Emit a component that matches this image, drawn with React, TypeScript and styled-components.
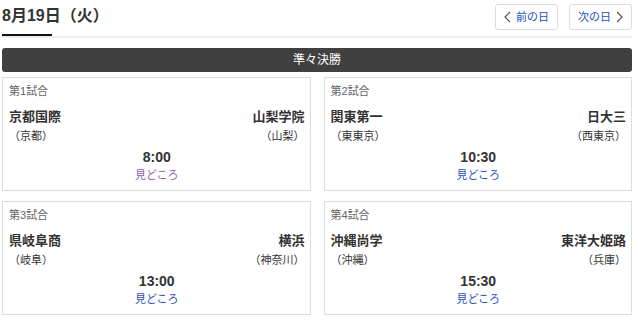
import React from "react";
import styled, { createGlobalStyle } from "styled-components";

const Global = createGlobalStyle`
  html, body { margin: 0; padding: 0; background: #fff; }
  body {
    font-family: "Liberation Sans", "Noto Sans CJK JP", sans-serif;
    color: #333;
  }
  * { box-sizing: border-box; }
`;

const Page = styled.div`
  width: 638px;
  padding: 0 6px 0 2px;
`;

const Header = styled.div`
  display: flex;
  justify-content: space-between;
  align-items: flex-start;
  padding: 4px 0 6px;
  border-bottom: 2px solid #eee;
  position: relative;
`;

const Title = styled.h1`
  margin: 0;
  font-size: 16px;
  line-height: 24px;
  font-weight: bold;
  color: #333;
  position: relative;
  &::after {
    content: "";
    position: absolute;
    left: 0;
    bottom: -8px;
    width: 50px;
    height: 2px;
    background: #111;
  }
`;

const Nav = styled.div`
  display: flex;
  gap: 11px;
`;

const NavButton = styled.button`
  display: flex;
  align-items: center;
  gap: 5px;
  height: 26px;
  padding: 0 8px;
  background: #fff;
  border: 1px solid #ddd;
  border-radius: 3px;
  font-family: "Liberation Sans", "Noto Sans CJK JP", sans-serif;
  font-size: 11px;
  line-height: 16px;
  color: #1f4fbf;
  cursor: pointer;
`;

const Chevron = ({ dir }: { dir: "left" | "right" }) => (
  <svg width="7" height="12" viewBox="0 0 7 12" fill="none">
    <polyline
      points={dir === "left" ? "6,1 1,6 6,11" : "1,1 6,6 1,11"}
      stroke="#555"
      strokeWidth="1.2"
    />
  </svg>
);

const Round = styled.div`
  margin-top: 10px;
  height: 24px;
  border-radius: 3px;
  background: #404040;
  color: #fff;
  font-size: 12px;
  line-height: 24px;
  text-align: center;
`;

const Grid = styled.div`
  margin-top: 5px;
  display: grid;
  grid-template-columns: 1fr 1fr;
  column-gap: 13px;
  row-gap: 10px;
`;

const Card = styled.div`
  border: 1px solid #ddd;
  padding: 5px 5px 7px 6px;
  background: #fff;
`;

const GameLabel = styled.div`
  font-size: 11px;
  line-height: 16px;
  color: #666;
`;

const Teams = styled.div`
  margin-top: 9px;
  display: flex;
  justify-content: space-between;
`;

const Team = styled.div<{ $right?: boolean }>`
  display: flex;
  flex-direction: column;
  align-items: ${(p) => (p.$right ? "flex-end" : "flex-start")};
`;

const TeamName = styled.div`
  font-size: 13px;
  line-height: 18px;
  font-weight: bold;
  color: #333;
`;

const Pref = styled.div`
  margin-top: 2px;
  font-size: 11px;
  line-height: 16px;
  color: #333;
`;

const Time = styled.div`
  margin-top: 3px;
  font-size: 14px;
  line-height: 20px;
  font-weight: bold;
  text-align: center;
  color: #333;
`;

const Highlight = styled.a<{ $visited?: boolean }>`
  display: block;
  font-size: 11px;
  line-height: 16px;
  text-align: center;
  text-decoration: none;
  color: ${(p) => (p.$visited ? "#8d62b3" : "#1f4fbf")};
`;

type Game = {
  no: number;
  home: string;
  homePref: string;
  away: string;
  awayPref: string;
  time: string;
  visited?: boolean;
};

const games: Game[] = [
  { no: 1, home: "京都国際", homePref: "（京都）", away: "山梨学院", awayPref: "（山梨）", time: "8:00", visited: true },
  { no: 2, home: "関東第一", homePref: "（東東京）", away: "日大三", awayPref: "（西東京）", time: "10:30" },
  { no: 3, home: "県岐阜商", homePref: "（岐阜）", away: "横浜", awayPref: "（神奈川）", time: "13:00" },
  { no: 4, home: "沖縄尚学", homePref: "（沖縄）", away: "東洋大姫路", awayPref: "（兵庫）", time: "15:30" },
];

export default function App() {
  return (
    <Page>
      <Global />
      <Header>
        <Title>8月19日（火）</Title>
        <Nav>
          <NavButton>
            <Chevron dir="left" />
            前の日
          </NavButton>
          <NavButton>
            次の日
            <Chevron dir="right" />
          </NavButton>
        </Nav>
      </Header>
      <Round>準々決勝</Round>
      <Grid>
        {games.map((g) => (
          <Card key={g.no}>
            <GameLabel>第{g.no}試合</GameLabel>
            <Teams>
              <Team>
                <TeamName>{g.home}</TeamName>
                <Pref>{g.homePref}</Pref>
              </Team>
              <Team $right>
                <TeamName>{g.away}</TeamName>
                <Pref>{g.awayPref}</Pref>
              </Team>
            </Teams>
            <Time>{g.time}</Time>
            <Highlight href="#" $visited={g.visited}>
              見どころ
            </Highlight>
          </Card>
        ))}
      </Grid>
    </Page>
  );
}
